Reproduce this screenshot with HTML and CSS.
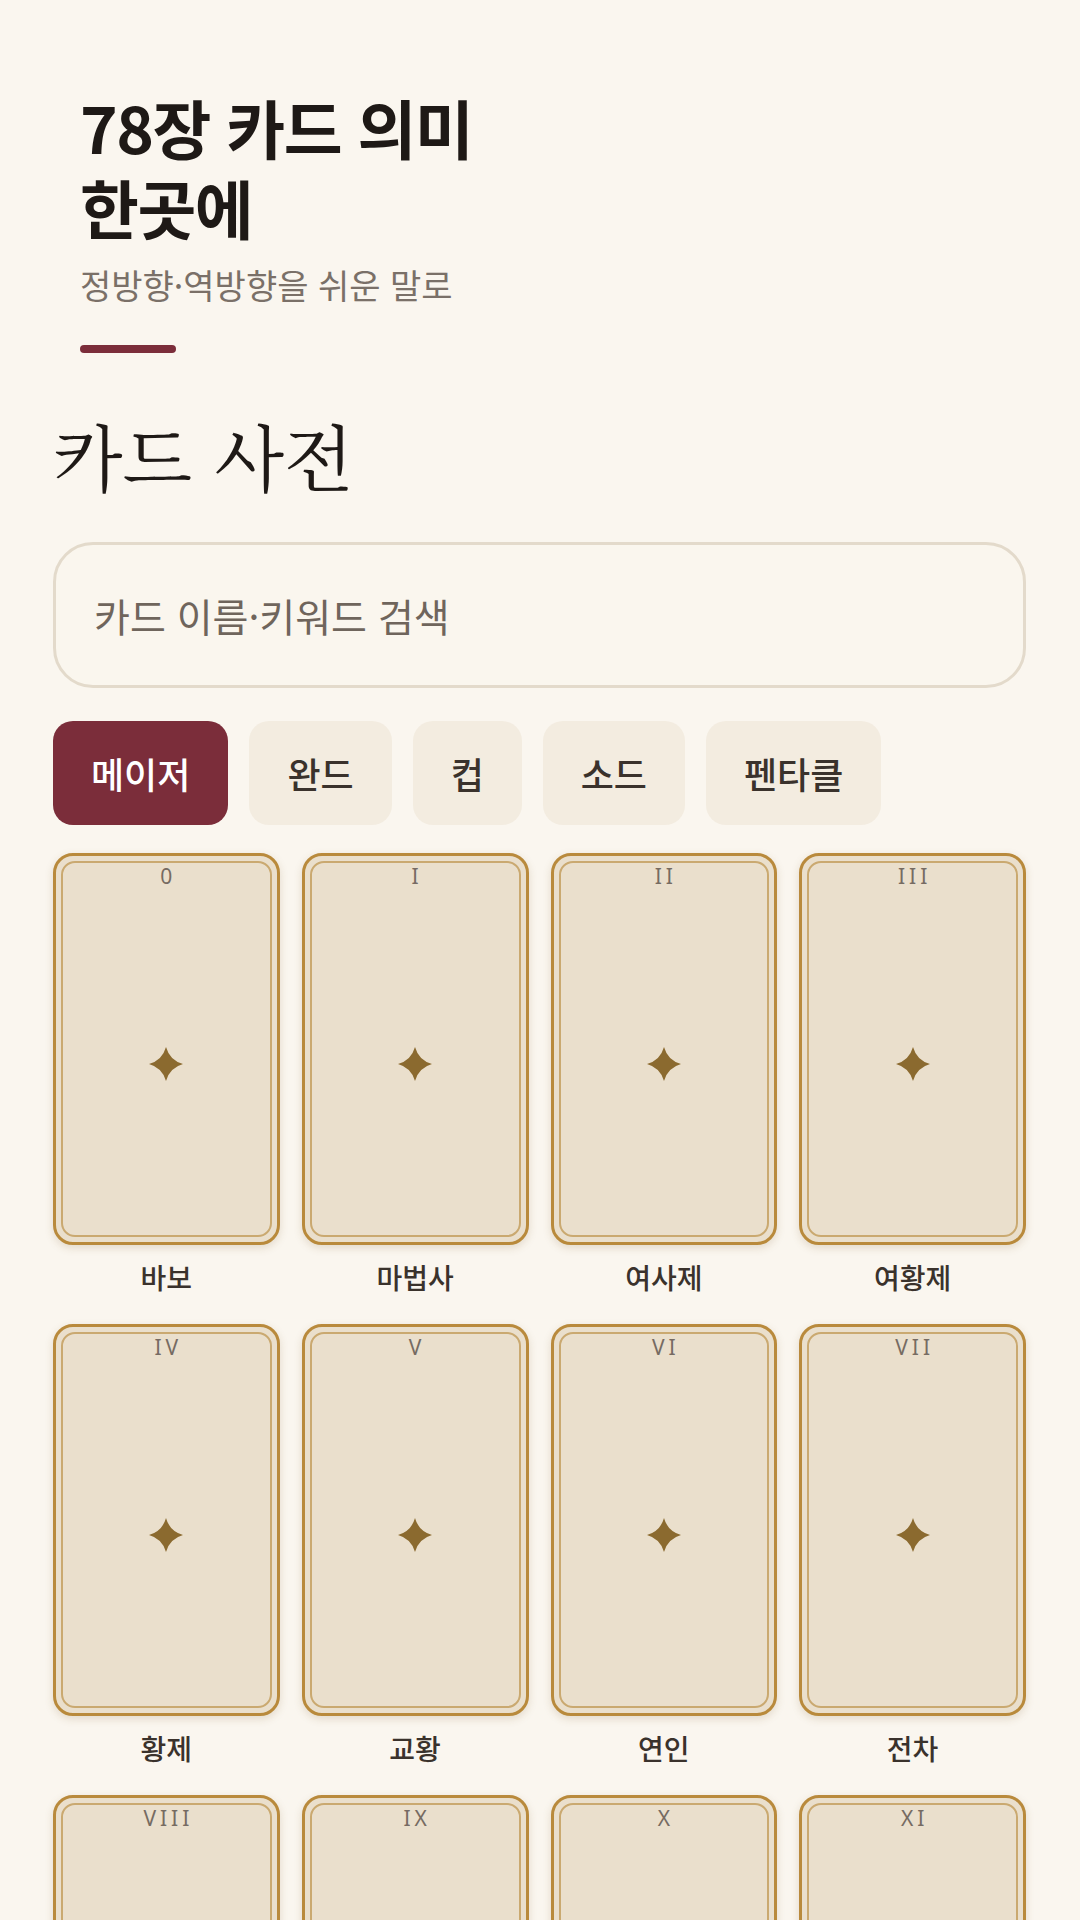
FILE: index.html
```html
<!DOCTYPE html>
<html lang="ko">
<head>
<meta charset="utf-8">
<title>카드 사전</title>
<link rel="stylesheet" href="styles.css">
</head>
<body>
<div class="page">
  <header class="hero">
    <h1 class="hero-title"><span class="hero-line">78장 카드 의미</span><span class="hero-line">한곳에</span></h1>
    <p class="hero-sub">정방향·역방향을 쉬운 말로</p>
    <div class="hero-bar"></div>
  </header>

  <h2 class="section-title">카드 사전</h2>

  <div class="search">카드 이름·키워드 검색</div>

  <nav class="tabs">
    <span class="tab active">메이저</span>
    <span class="tab">완드</span>
    <span class="tab">컵</span>
    <span class="tab">소드</span>
    <span class="tab">펜타클</span>
  </nav>

  <div class="grid" id="grid"></div>
</div>
<script>
const cards = [
  ["0","바보"],["I","마법사"],["II","여사제"],["III","여황제"],
  ["IV","황제"],["V","교황"],["VI","연인"],["VII","전차"],
  ["VIII","은둔자"],["IX","운명의 수레바퀴"],["X","힘"],["XI","정의"]
];
const star = '<svg class="star" viewBox="0 0 24 24"><path d="M12 0 Q14.6 9.4 24 12 Q14.6 14.6 12 24 Q9.4 14.6 0 12 Q9.4 9.4 12 0Z"/></svg>';
const grid = document.getElementById('grid');
grid.innerHTML = cards.map(([n, name]) =>
  '<div class="item"><div class="card"><div class="card-inner"><span class="num">' + n + '</span><div class="star-wrap">' + star + '</div></div></div><div class="label">' + name + '</div></div>'
).join('');
</script>
</body>
</html>
```

FILE: styles.css
```css
* { box-sizing: border-box; }
html, body { margin: 0; padding: 0; }
body {
  background: #faf6ef;
  font-family: "Noto Sans CJK KR", "Noto Sans", sans-serif;
  color: #2b2420;
  width: 1080px;
  height: 1920px;
  overflow: hidden;
}
.page {
  padding: 0 54px 0 53px;
}
.hero {
  padding: 86px 0 0 27px;
}
.hero-title {
  margin: 0;
  font-size: 64px;
  line-height: 80px;
  font-weight: 700;
  letter-spacing: -1.5px;
  color: #1e1916;
}
.hero-line {
  display: block;
  height: 80px;
}
.hero-sub {
  margin: 19px 0 0;
  font-size: 34px;
  line-height: 40px;
  color: #7a7068;
  letter-spacing: 0;
}
.hero-bar {
  margin-top: 40px;
  width: 96px;
  height: 8px;
  border-radius: 4px;
  background: #7b2d3a;
}
.section-title {
  margin: 56px 0 0;
  font-family: "Noto Serif CJK KR", serif;
  font-weight: 400;
  font-size: 72px;
  line-height: 90px;
  color: #1e1916;
}
.search {
  margin-top: 43px;
  height: 146px;
  border: 3px solid #e3dacb;
  border-radius: 40px;
  background: #faf6ee;
  display: flex;
  align-items: center;
  padding-left: 38px;
  font-size: 39px;
  color: #6f655c;
}
.tabs {
  margin-top: 33px;
  display: flex;
  gap: 21px;
}
.tab {
  height: 104px;
  padding: 0 38px;
  border-radius: 20px;
  background: #f3ece0;
  display: flex;
  align-items: center;
  font-size: 36px;
  font-weight: 500;
  color: #3a322c;
}
.tab.active {
  background: #7b2d3a;
  color: #fff;
}
.grid {
  margin-top: 28px;
  display: grid;
  grid-template-columns: repeat(4, 1fr);
  column-gap: 22px;
  row-gap: 27px;
}
.card {
  height: 392px;
  border: 3px solid #b98a3c;
  border-radius: 20px;
  background: #eadfcc;
  padding: 5px;
  box-shadow: 0 3px 8px rgba(120, 90, 40, 0.18);
}
.card-inner {
  height: 100%;
  border: 2.5px solid #caa970;
  border-radius: 14px;
  display: flex;
  flex-direction: column;
  align-items: center;
}
.num {
  margin-top: -1px;
  margin-bottom: 3px;
  font-family: "Noto Sans", sans-serif;
  font-size: 21px;
  line-height: 28px;
  letter-spacing: 4px;
  padding-left: 4px;
  color: #766b62;
}
.star-wrap {
  flex: 1;
  display: flex;
  align-items: center;
  justify-content: center;
}
.star {
  width: 34px;
  height: 34px;
  fill: #8b6a2f;
}
.label {
  margin-top: 12px;
  text-align: center;
  font-size: 28px;
  line-height: 40px;
  font-weight: 500;
  color: #3a322c;
}
```
